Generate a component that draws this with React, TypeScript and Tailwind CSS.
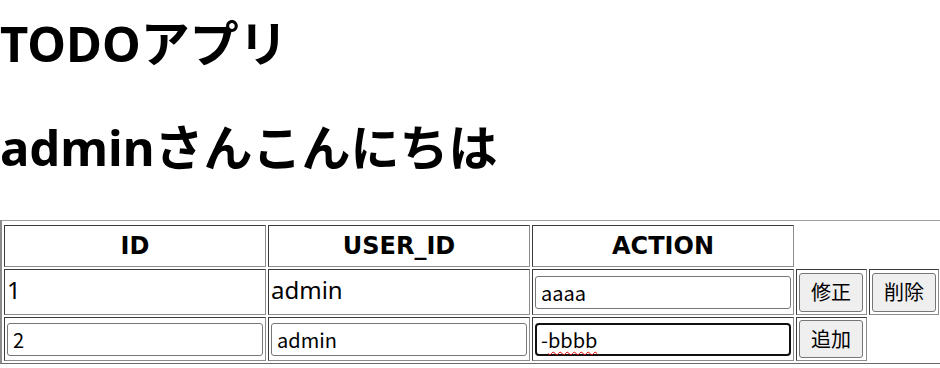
const cell =
  'border border-t-[#3c3c3c] border-l-[#3c3c3c] border-r-[#8c8c8c] border-b-[#8c8c8c] px-[2px] py-[2px]';

const head = `${cell} h-[41px] text-[24px] font-bold font-['DejaVu_Sans',sans-serif]`;

const text =
  'border border-t-[#3c3c3c] border-l-[#3c3c3c] border-r-[#8c8c8c] border-b-[#8c8c8c] px-[2px] pt-0 pb-[4px] h-[46px] text-[24px] text-left';

const input =
  "block w-[256px] h-[33px] rounded-[3px] border border-[#767676] bg-white px-[5px] text-[20px] leading-[31px] text-black outline-none font-['Noto_Sans_CJK_JP',sans-serif]";

const focused =
  "block w-[256px] h-[33px] rounded-[4px] border-2 border-[#101010] bg-white px-[4px] text-[20px] leading-[29px] text-black font-['Noto_Sans_CJK_JP',sans-serif]";

const button =
  "block w-[64px] rounded-[3px] border border-[#767676] bg-[#efefef] text-[20px] text-black font-['Noto_Sans_CJK_JP',sans-serif]";

export default function App() {
  return (
    <div className="w-[940px] h-[368px] overflow-hidden bg-white text-black font-['Noto_Sans','Noto_Sans_CJK_JP',sans-serif]">
      <h1 className="pt-[19px] text-[49px] leading-[49px] font-bold">TODOアプリ</h1>
      <h1 className="mt-[55px] text-[49px] leading-[49px] font-bold">adminさんこんにちは</h1>

      <table className="mt-[48px] pt-[2px] border-separate border-spacing-[2px] border-t border-l-2 border-r border-b border-t-[#a0a0a0] border-l-[#8c8c8c] border-r-[#6a6a6a] border-b-[#6a6a6a]">
        <thead>
          <tr>
            <th className={head}>ID</th>
            <th className={head}>USER_ID</th>
            <th className={head}>ACTION</th>
          </tr>
        </thead>
        <tbody>
          <tr>
            <td className={text}>1</td>
            <td className={text}>admin</td>
            <td className={cell}>
              <input className={input} defaultValue="aaaa" />
            </td>
            <td className={`${cell} pr-[3px]`}>
              <button className={`${button} h-[39px]`}>修正</button>
            </td>
            <td className={cell}>
              <button className={`${button} h-[39px]`}>削除</button>
            </td>
          </tr>
          <tr>
            <td className={cell}>
              <input className={input} defaultValue="2" />
            </td>
            <td className={cell}>
              <input className={input} defaultValue="admin" />
            </td>
            <td className={cell}>
              <div className={focused}>
                -<span className="underline decoration-wavy decoration-[#e00000] decoration-1 underline-offset-[3px]">bbbb</span>
              </div>
            </td>
            <td className={`${cell} pr-[3px]`}>
              <button className={`${button} h-[38px]`}>追加</button>
            </td>
          </tr>
        </tbody>
      </table>
    </div>
  );
}
